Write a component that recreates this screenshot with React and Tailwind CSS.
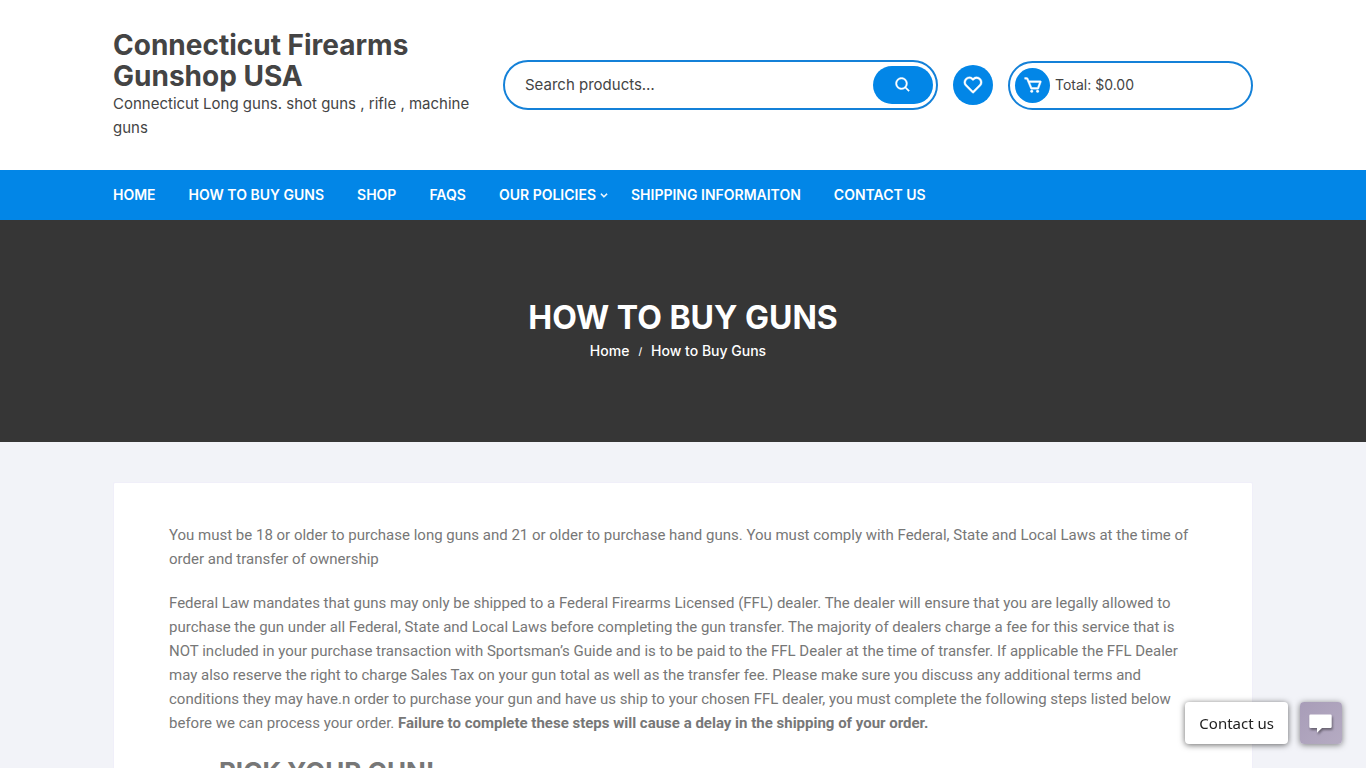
import { BiSearch, BiHeart, BiCart, BiChevronDown } from "react-icons/bi";

const navItems = [
  { label: "Home" },
  { label: "How to Buy Guns" },
  { label: "Shop" },
  { label: "FAQs" },
  { label: "Our Policies", menu: true },
  { label: "Shipping Informaiton" },
  { label: "Contact us" },
];

function Header() {
  return (
    <header className="bg-white">
      <div className="mx-auto flex min-h-[170px] max-w-[1140px] items-center gap-[15px]">
        <div className="w-[375px] shrink-0 text-[#444444]">
          <a href="#" className="block text-[28px] leading-[31px] font-bold">
            Connecticut Firearms Gunshop USA
          </a>
          <p className="text-[15px] leading-6">
            Connecticut Long guns. shot guns , rifle , machine guns
          </p>
        </div>
        <form
          role="search"
          className="flex h-[50px] grow items-center rounded-full border-2 border-[#1481d8] pr-[3px] pl-5"
        >
          <input
            type="search"
            aria-label="Search products"
            placeholder="Search products…"
            className="min-w-0 grow bg-transparent text-[15px] leading-6 text-[#444444] outline-none placeholder:text-[#444444]"
          />
          <button
            type="submit"
            aria-label="Search"
            className="flex h-[38px] w-[60px] items-center justify-center rounded-full bg-[#0286e7] text-white"
          >
            <BiSearch size={18} strokeWidth="0.5" />
          </button>
        </form>
        <a
          href="#"
          aria-label="Wishlist"
          className="flex size-10 items-center justify-center rounded-full bg-[#0286e7] text-white"
        >
          <BiHeart size={22} strokeWidth="0.4" />
        </a>
        <a
          href="#"
          className="flex h-[49px] w-[245px] items-center gap-[5px] rounded-full border-2 border-[#1481d8] pl-[5px] text-sm text-[#444444]"
        >
          <span className="flex size-[35px] items-center justify-center rounded-full bg-[#0286e7] text-white">
            <BiCart size={20} strokeWidth="0.5" />
          </span>
          <span>Total: $0.00</span>
        </a>
      </div>
    </header>
  );
}

function Nav() {
  return (
    <nav className="bg-[#0286e7]">
      <ul className="mx-auto flex h-[50px] max-w-[1140px] items-center text-sm font-semibold text-white uppercase">
        {navItems.map((item) => (
          <li key={item.label} className={item.menu ? "mr-5" : "mr-[33px]"}>
            <a href="#" className="flex items-center gap-[1px]">
              {item.label}
              {item.menu && <BiChevronDown size={14} strokeWidth="0.8" />}
            </a>
          </li>
        ))}
      </ul>
    </nav>
  );
}

function Hero() {
  return (
    <section className="flex h-[222px] flex-col items-center justify-center bg-[#363636] pb-[2px] text-white">
      <h1 className="text-[32px] leading-[42px] font-bold uppercase">How to Buy Guns</h1>
      <nav aria-label="Breadcrumb" className="flex items-center gap-[9px] pr-[10px] text-sm leading-6 font-medium">
        <a href="#">Home</a>
        <span className="text-[10px]">/</span>
        <span>How to Buy Guns</span>
      </nav>
    </section>
  );
}

function ChatWidget() {
  return (
    <div className="fixed right-6 bottom-6 flex gap-3">
      <button
        type="button"
        className="h-[42px] rounded-[4px] bg-white px-[14px] font-['Noto_Sans',sans-serif] text-[15px] text-[#222222] shadow-[0_1px_6px_rgba(0,0,0,0.6)]"
      >
        Contact us
      </button>
      <button
        type="button"
        aria-label="Open chat"
        className="flex size-[42px] items-center justify-center rounded-[4px] bg-linear-to-br from-[#a89db8] to-[#b5abc2] shadow-[0_1px_6px_rgba(0,0,0,0.5)]"
      >
        <svg width="26" height="22" viewBox="0 0 26 22" className="drop-shadow-[1px_2px_1px_rgba(0,0,0,0.4)]">
          <path
            d="M2.500 2.500h20a1.200 1.200 0 0 1 1.200 1.200v11a1.200 1.200 0 0 1-1.200 1.200h-8.500l-5 4.800v-4.800H2.500A1.200 1.200 0 0 1 1.300 14.700V3.700a1.200 1.200 0 0 1 1.200-1.200z"
            fill="#fff"
          />
        </svg>
      </button>
    </div>
  );
}

export default function App() {
  return (
    <div className="min-h-screen bg-[#f2f3f8] font-['Inter',sans-serif]">
      <Header />
      <Nav />
      <Hero />
      <main className="mx-auto max-w-[1140px] pt-10">
        <article className="rounded-[2px] border border-[#f0eff9] bg-white px-[55px] py-10 font-['Roboto',sans-serif] text-[15px] leading-6 text-[#777777]">
          <p className="mb-5">
            You must be 18 or older to purchase long guns and 21 or older to purchase hand guns. You
            must comply with Federal, State and Local Laws at the time of order and transfer of
            ownership
          </p>
          <p className="mb-5">
            Federal Law mandates that guns may only be shipped to a Federal Firearms Licensed (FFL)
            dealer. The dealer will ensure that you are legally allowed to purchase the gun under
            all Federal, State and Local Laws before completing the gun transfer. The majority of
            dealers charge a fee for this service that is NOT included in your purchase transaction
            with Sportsman’s Guide and is to be paid to the FFL Dealer at the time of transfer. If
            applicable the FFL Dealer may also reserve the right to charge Sales Tax on your gun
            total as well as the transfer fee. Please make sure you discuss any additional terms and
            conditions they may have.n order to purchase your gun and have us ship to your chosen
            FFL dealer, you must complete the following steps listed below before we can process
            your order.{" "}
            <strong className="font-bold">
              Failure to complete these steps will cause a delay in the shipping of your order.
            </strong>
          </p>
          <h2 className="pl-[50px] font-['Inter',sans-serif] text-[26px] leading-[34px] font-bold">
            PICK YOUR GUN!
          </h2>
        </article>
      </main>
      <ChatWidget />
    </div>
  );
}
